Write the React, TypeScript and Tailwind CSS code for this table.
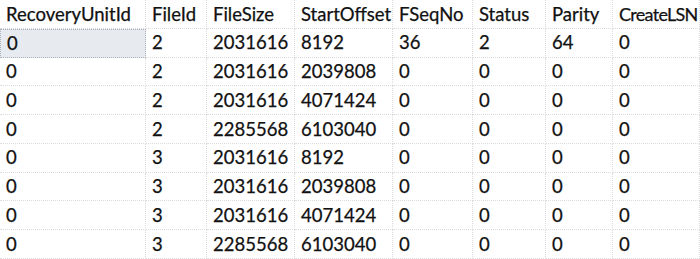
import React from "react";

const colClass = [
  "w-[146px]",
  "w-[61px]",
  "w-[88px]",
  "w-[98px]",
  "w-[80px]",
  "w-[73px]",
  "w-[67px]",
  "w-[87px]",
];
const header = ["RecoveryUnitId", "FileId", "FileSize", "StartOffset", "FSeqNo", "Status", "Parity", "CreateLSN"];
const rows = [
  ["0", "2", "2031616", "8192", "36", "2", "64", "0"],
  ["0", "2", "2031616", "2039808", "0", "0", "0", "0"],
  ["0", "2", "2031616", "4071424", "0", "0", "0", "0"],
  ["0", "2", "2285568", "6103040", "0", "0", "0", "0"],
  ["0", "3", "2031616", "8192", "0", "0", "0", "0"],
  ["0", "3", "2031616", "2039808", "0", "0", "0", "0"],
  ["0", "3", "2031616", "4071424", "0", "0", "0", "0"],
  ["0", "3", "2285568", "6103040", "0", "0", "0", "0"],
];

export default function App() {
  const all = [header, ...rows];
  return (
    <div className="w-[700px] h-[259px] overflow-hidden bg-white text-[#111111] text-[18.5px] font-['Lato',sans-serif] [-webkit-text-stroke:0.25px_#111111]">
      {all.map((r, ri) => (
        <div key={ri} className="flex h-[28.75px]">
          {r.map((c, ci) => {
            const selected = ri === 1 && ci === 0;
            return (
              <div
                key={ci}
                className={
                  colClass[ci] +
                  " shrink-0 flex items-center pl-[6px] leading-none whitespace-nowrap border-r border-b border-dotted " +
                  (selected
                    ? "bg-[#e7ebf0] border-[#a9b1bb] border-t border-l"
                    : "border-[#dcdcdc]")
                }
              >
                <span className={ci === 7 && ri === 0 ? "text-[18px] tracking-[-0.7px]" : ""}>{c}</span>
              </div>
            );
          })}
        </div>
      ))}
    </div>
  );
}
